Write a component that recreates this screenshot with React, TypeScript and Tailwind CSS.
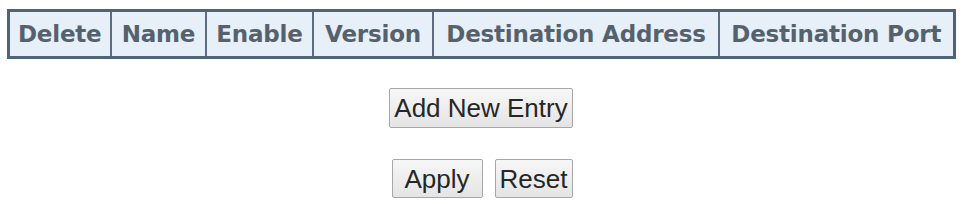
export default function App() {
  const cols = [
    { label: 'Delete', w: 'w-[103px]' },
    { label: 'Name', w: 'w-[95px]' },
    { label: 'Enable', w: 'w-[107px]' },
    { label: 'Version', w: 'w-[120px]' },
    { label: 'Destination Address', w: 'w-[286px]' },
    { label: 'Destination Port', w: 'w-[235px]' },
  ]

  return (
    <div className="w-[962px] h-[204px] bg-white flex flex-col items-center pt-[9px]">
      {/* header table */}
      <table className="w-[946px] border-collapse border-[3px] border-[#4f6379] table-fixed">
        <thead>
          <tr className="h-[47px] bg-[#e7eff9]">
            {cols.map((c) => (
              <th
                key={c.label}
                className={`${c.w} border-2 border-[#5a6d82] text-center align-middle p-0 pt-[1px] font-['DejaVu_Sans',sans-serif] font-bold text-[23px] tracking-[-0.2px] text-[#56616e] whitespace-nowrap`}
              >
                {c.label}
              </th>
            ))}
          </tr>
        </thead>
      </table>

      <div className="mt-[29px]">
        <button className="w-[184px] h-[40px] border border-[#a7a7a7] rounded-[2px] bg-gradient-to-b from-[#f7f7f7] to-[#e4e4e4] font-['Liberation_Sans',Arial,sans-serif] text-[26px] text-[#262626] leading-none">
          Add New Entry
        </button>
      </div>

      <div className="mt-[31px] flex gap-[12px] pl-[2px]">
        <button className="w-[91px] h-[39px] border border-[#a7a7a7] rounded-[2px] bg-gradient-to-b from-[#f7f7f7] to-[#e4e4e4] font-['Liberation_Sans',Arial,sans-serif] text-[26px] text-[#262626] leading-none">
          Apply
        </button>
        <button className="w-[78px] h-[39px] border border-[#a7a7a7] rounded-[2px] bg-gradient-to-b from-[#f7f7f7] to-[#e4e4e4] font-['Liberation_Sans',Arial,sans-serif] text-[26px] text-[#262626] leading-none">
          Reset
        </button>
      </div>
    </div>
  )
}
